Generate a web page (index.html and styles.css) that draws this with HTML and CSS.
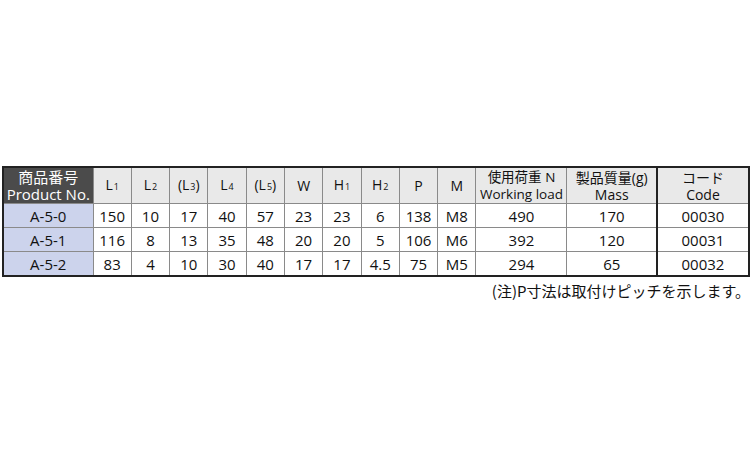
FILE: index.html
```html
<!DOCTYPE html>
<html lang="ja">
<head>
<meta charset="utf-8">
<link rel="stylesheet" href="styles.css">
</head>
<body>
<div class="wrap">
<table class="spec">
<colgroup>
<col class="c-prod"><col class="c-n"><col class="c-n"><col class="c-n"><col class="c-n"><col class="c-n"><col class="c-n"><col class="c-n"><col class="c-n"><col class="c-n"><col class="c-n"><col class="c-load"><col class="c-mass"><col class="c-code">
</colgroup>
<thead>
<tr>
<th class="prod-h"><span class="ln">商品番号</span><span class="ln">Product No.</span></th>
<th>L<span class="s">1</span></th>
<th>L<span class="s">2</span></th>
<th>(L<span class="s">3</span>)</th>
<th>L<span class="s">4</span></th>
<th>(L<span class="s">5</span>)</th>
<th>W</th>
<th>H<span class="s">1</span></th>
<th>H<span class="s">2</span></th>
<th>P</th>
<th>M</th>
<th class="small"><span class="ln">使用荷重 N</span><span class="ln">Working load</span></th>
<th><span class="ln">製品質量(g)</span><span class="ln">Mass</span></th>
<th class="code"><span class="ln">コード</span><span class="ln">Code</span></th>
</tr>
</thead>
<tbody>
<tr><td class="prod">A-5-0</td><td>150</td><td>10</td><td>17</td><td>40</td><td>57</td><td>23</td><td>23</td><td>6</td><td>138</td><td>M8</td><td>490</td><td>170</td><td class="code">00030</td></tr>
<tr><td class="prod">A-5-1</td><td>116</td><td>8</td><td>13</td><td>35</td><td>48</td><td>20</td><td>20</td><td>5</td><td>106</td><td>M6</td><td>392</td><td>120</td><td class="code">00031</td></tr>
<tr><td class="prod">A-5-2</td><td>83</td><td>4</td><td>10</td><td>30</td><td>40</td><td>17</td><td>17</td><td>4.5</td><td>75</td><td>M5</td><td>294</td><td>65</td><td class="code">00032</td></tr>
</tbody>
</table>
<p class="note">(注)P寸法は取付けピッチを示します。</p>
</div>
</body>
</html>
```
FILE: styles.css
```css
html, body {
  margin: 0;
  padding: 0;
  background: #ffffff;
}
.wrap {
  padding: 166px 2px 0 2px;
  width: 746px;
  font-family: "Open Sans", "Noto Sans CJK JP", sans-serif;
  color: #111111;
}
.spec {
  border-collapse: collapse;
  table-layout: fixed;
  width: 746px;
  border: 2px solid #222;
}
.c-prod { width: 90px; }
.c-n { width: 38.3px; }
.c-load { width: 91px; }
.c-mass { width: 90px; }
.c-code { width: 92px; }
.spec th, .spec td {
  border: 1px solid #8a8a8a;
  text-align: center;
  padding: 0;
  white-space: nowrap;
  overflow: hidden;
}
.spec th {
  height: 35px;
  background: #e9e9e9;
  font-weight: normal;
  font-size: 14px;
  line-height: 17px;
}
.ln {
  display: block;
  height: 17px;
}
.spec td {
  height: 23px;
  font-size: 15px;
  line-height: 20px;
}
.spec th.prod-h {
  background: #4b4b4b;
  color: #ffffff;
  font-size: 15px;
}
.spec td.prod {
  background: #ccd3ec;
}
.spec th.small {
  font-size: 13.5px;
}
.spec .code {
  border-left: 2px solid #222;
}
.s {
  font-size: 9px;
  vertical-align: baseline;
  margin-left: 1px;
}
.note {
  margin: 5px -2px 0 0;
  text-align: right;
  font-size: 15px;
  line-height: 18px;
  font-family: "Noto Sans CJK JP", sans-serif;
}
```
